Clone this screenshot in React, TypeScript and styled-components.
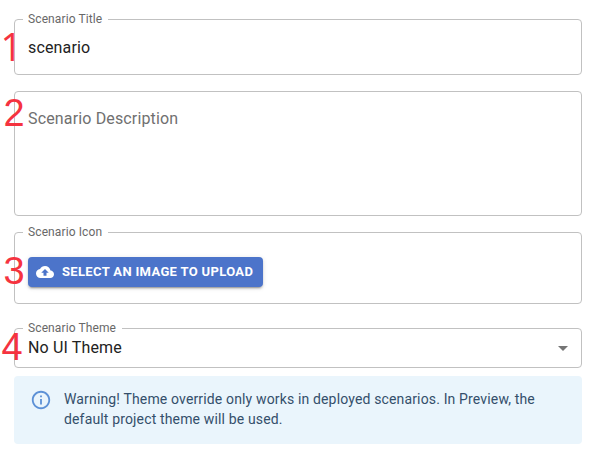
import React from 'react';
import styled, { createGlobalStyle } from 'styled-components';

const GlobalStyle = createGlobalStyle`
  *, *::before, *::after { box-sizing: border-box; }
  body { margin: 0; background: #fff; font-family: Roboto, sans-serif; }
`;

const Form = styled.main`
  width: 568px;
  margin: 19px 0 0 14px;
  display: flex;
  flex-direction: column;
`;

const Field = styled.section<{ $height: number; $gap?: number }>`
  position: relative;
  display: flex;
  align-items: flex-start;
  height: ${(p) => p.$height}px;
  margin-top: ${(p) => p.$gap ?? 0}px;
  padding: 0 13px;
  border: 1px solid #c1c1c1;
  border-radius: 4px;
`;

const Label = styled.label`
  position: absolute;
  top: -8px;
  left: 8px;
  padding: 0 6px 0 5px;
  background: #fff;
  color: #686868;
  font-size: 12px;
  line-height: 14px;
  letter-spacing: 0.11px;
  white-space: nowrap;
`;

const Value = styled.div<{ $top: number; $muted?: boolean }>`
  flex: 1;
  margin-top: ${(p) => p.$top}px;
  color: ${(p) => (p.$muted ? '#707070' : '#222')};
  font-size: 16px;
  line-height: 22px;
  letter-spacing: 0.15px;
`;

const Marker = styled.span<{ $top: number; $left: number; $plain?: boolean }>`
  position: absolute;
  top: ${(p) => p.$top}px;
  left: ${(p) => p.$left}px;
  color: #f5333f;
  font-family: ${(p) => (p.$plain ? "'Open Sans'" : "'Liberation Sans'")}, sans-serif;
  font-size: 38px;
  line-height: 38px;
`;

const UploadButton = styled.button`
  display: flex;
  align-items: center;
  gap: 8px;
  width: 235px;
  height: 30px;
  margin-top: 24px;
  padding: 0 0 0 8px;
  border: 0;
  border-radius: 4px;
  background: #4c74ca;
  color: #fff;
  box-shadow: 0 3px 1px -2px rgba(0, 0, 0, 0.2), 0 2px 2px rgba(0, 0, 0, 0.14), 0 1px 5px rgba(0, 0, 0, 0.12);
  font: 700 13px/22px Roboto, sans-serif;
  letter-spacing: 0.34px;
  white-space: nowrap;
`;

const Arrow = styled.svg`
  margin: 7px -7px 0 0;
  flex: none;
`;

const Notice = styled.aside`
  display: flex;
  height: 68px;
  margin-top: 8px;
  padding: 13px 16px 0 16px;
  border-radius: 4px;
  background: #eaf5fc;
  color: #344f6b;
`;

const InfoIcon = styled.svg`
  flex: none;
  margin: 0 12px 0 0;
`;

const Message = styled.p`
  margin: 0;
  font-size: 14px;
  line-height: 20px;
  letter-spacing: 0.15px;
`;

export default function App() {
  return (
    <>
      <GlobalStyle />
      <Form>
        <Field $height={56}>
          <Label>Scenario Title</Label>
          <Value $top={17}>scenario</Value>
          <Marker $top={7} $left={-14.5} $plain>1</Marker>
        </Field>
        <Field $height={125} $gap={16}>
          <Value $top={16} $muted>Scenario Description</Value>
          <Marker $top={2} $left={-11.5}>2</Marker>
        </Field>
        <Field $height={72} $gap={16}>
          <Label>Scenario Icon</Label>
          <UploadButton type="button">
            <svg width="18" height="18" viewBox="0 0 24 24" fill="currentColor">
              <path d="M19.35 10.04C18.67 6.59 15.64 4 12 4 9.11 4 6.6 5.64 5.35 8.04 2.34 8.36 0 10.91 0 14c0 3.31 2.69 6 6 6h13c2.76 0 5-2.24 5-5 0-2.64-2.05-4.78-4.65-4.96zM14 13v4h-4v-4H7l5-5 5 5h-3z" />
            </svg>
            SELECT AN IMAGE TO UPLOAD
          </UploadButton>
          <Marker $top={19} $left={-11.5}>3</Marker>
        </Field>
        <Field $height={40} $gap={24}>
          <Label>Scenario Theme</Label>
          <Value $top={8}>No UI Theme</Value>
          <Arrow width="24" height="24" viewBox="0 0 24 24" fill="#757575">
            <path d="M7 10l5 5 5-5z" />
          </Arrow>
          <Marker $top={-1} $left={-13.5}>4</Marker>
        </Field>
        <Notice>
          <InfoIcon width="22" height="22" viewBox="0 0 24 24" fill="#5d91d6">
            <path d="M11 7h2v2h-2zm0 4h2v6h-2zm1-9C6.48 2 2 6.48 2 12s4.48 10 10 10 10-4.48 10-10S17.52 2 12 2zm0 18c-4.41 0-8-3.59-8-8s3.59-8 8-8 8 3.59 8 8-3.59 8-8 8z" />
          </InfoIcon>
          <Message>
            Warning! Theme override only works in deployed scenarios. In Preview, the default project theme will be used.
          </Message>
        </Notice>
      </Form>
    </>
  );
}
